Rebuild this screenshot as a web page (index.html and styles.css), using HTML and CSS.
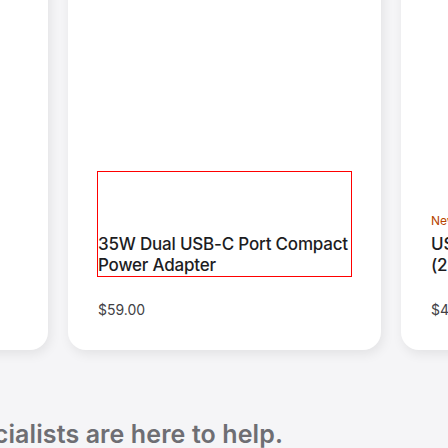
FILE: index.html
```html
<!DOCTYPE html>
<html lang="en">
<head>
<meta charset="utf-8">
<link rel="stylesheet" href="styles.css">
</head>
<body>
<main class="page">
  <div class="row">
    <article class="card">
      <div class="media"></div>
      <div class="info">
        <h3 class="title">20W USB-C Power Adapter</h3>
      </div>
      <p class="price">$19.00</p>
    </article>
    <article class="card">
      <div class="media"></div>
      <div class="info outlined">
        <h3 class="title">35W Dual USB-C Port Compact Power Adapter</h3>
      </div>
      <p class="price">$59.00</p>
    </article>
    <article class="card">
      <div class="media"></div>
      <div class="info">
        <span class="eyebrow">New</span>
        <h3 class="title">USB-C to MagSafe 3 Cable<br>(2 m)</h3>
      </div>
      <p class="price">$49.00</p>
    </article>
  </div>
  <div class="help">
    <h2 class="help-title">Need shopping help? Our Specialists are here to help.</h2>
  </div>
</main>
</body>
</html>
```
FILE: styles.css
```css
html, body {
  margin: 0;
  padding: 0;
}
body {
  background: #f5f5f7;
  font-family: Inter, "Noto Sans", sans-serif;
  color: #1d1d1f;
  width: 448px;
  height: 448px;
  overflow: hidden;
}
.page {
  display: flex;
  flex-direction: column;
}
.row {
  display: flex;
  gap: 20px;
  margin-top: -40px;
  margin-left: -265px;
}
.card {
  flex: 0 0 313px;
  box-sizing: border-box;
  background: #fff;
  border-radius: 18px;
  padding: 0 30px 30px;
  box-shadow: 2px 4px 12px rgba(0, 0, 0, 0.08);
  display: flex;
  flex-direction: column;
}
.media {
  height: 212px;
}
.info {
  height: 104px;
  display: flex;
  flex-direction: column;
  justify-content: flex-end;
}
.outlined {
  outline: 1px solid #ff0000;
}
.eyebrow {
  font-size: 12px;
  line-height: 16px;
  color: #b64400;
  margin-bottom: 5px;
}
.title {
  margin: 0;
  font-size: 17px;
  line-height: 21px;
  font-weight: 500;
  letter-spacing: -0.2px;
  color: #1d1d1f;
}
.price {
  margin: 24px 0 0;
  font-size: 14px;
  line-height: 20px;
  color: #424245;
}
.help {
  width: 283px;
  display: flex;
  justify-content: flex-end;
  margin-top: 70px;
}
.help-title {
  margin: 0;
  white-space: nowrap;
  font-size: 25px;
  line-height: 28px;
  font-weight: 600;
  color: #6e6e73;
  letter-spacing: 0.1px;
}
```
